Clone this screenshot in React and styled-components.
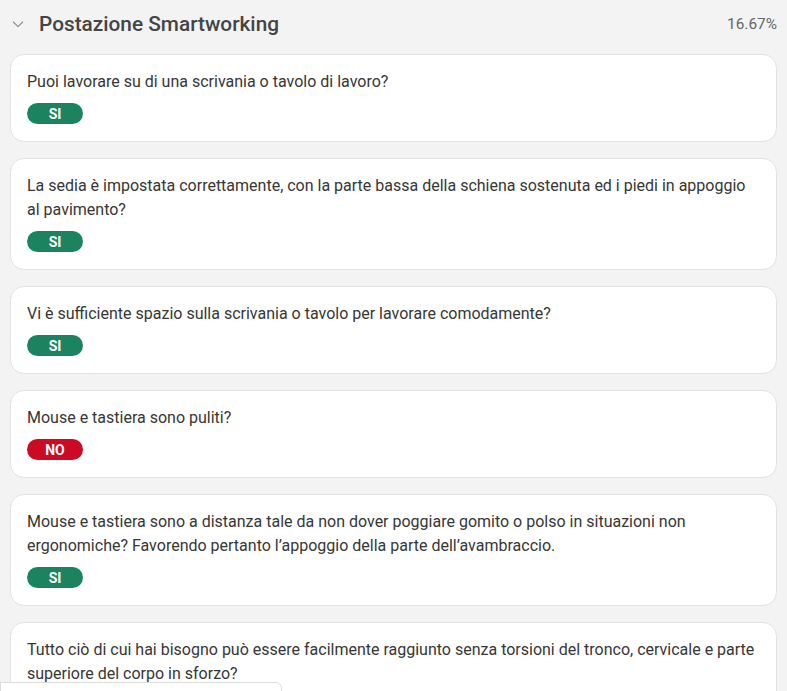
import React from "react";
import styled, { createGlobalStyle } from "styled-components";

const GlobalStyle = createGlobalStyle`
  html, body {
    margin: 0;
    padding: 0;
    background: #f3f3f3;
    font-family: Roboto, "Liberation Sans", Arial, sans-serif;
    color: #333;
  }
`;

const Page = styled.div`
  padding: 0 10px;
  height: 691px;
  overflow: hidden;
`;

const Header = styled.div`
  display: flex;
  align-items: center;
  height: 48px;
`;

const Chevron = styled.span`
  display: flex;
  align-items: center;
  width: 18px;
  margin-right: 11px;
  color: #8a8a8a;
`;

const Title = styled.h2`
  flex: 1;
  margin: 0;
  font-size: 20.8px;
  font-weight: 500;
  color: #444;
`;

const Percent = styled.span`
  font-size: 15.4px;
  color: #666;
`;

const List = styled.div`
  display: flex;
  flex-direction: column;
  gap: 16px;
  padding-top: 6px;
`;

const Card = styled.div`
  background: #fff;
  border: 1px solid #e2e2e2;
  border-radius: 14px;
  padding: 15px 16px 17px;
`;

const Question = styled.p`
  margin: 0;
  font-size: 16px;
  line-height: 24px;
  color: #363636;
`;

const Badge = styled.span`
  display: inline-flex;
  align-items: center;
  justify-content: center;
  margin-top: 9px;
  width: 56px;
  height: 21px;
  border-radius: 11px;
  font-size: 14px;
  font-weight: 700;
  color: #fff;
  background: ${(p) => (p.$no ? "#cc0a24" : "#1c8361")};
`;

const Footer = styled.div`
  position: fixed;
  left: 0;
  bottom: -10px;
  width: 280px;
  height: 17px;
  background: #fff;
  border: 1px solid #dcdcdc;
  border-radius: 0 6px 0 0;
`;

const items = [
  { q: "Puoi lavorare su di una scrivania o tavolo di lavoro?", a: "SI" },
  {
    q: "La sedia è impostata correttamente, con la parte bassa della schiena sostenuta ed i piedi in appoggio al pavimento?",
    a: "SI",
  },
  { q: "Vi è sufficiente spazio sulla scrivania o tavolo per lavorare comodamente?", a: "SI" },
  { q: "Mouse e tastiera sono puliti?", a: "NO" },
  {
    q: "Mouse e tastiera sono a distanza tale da non dover poggiare gomito o polso in situazioni non ergonomiche? Favorendo pertanto l’appoggio della parte dell’avambraccio.",
    a: "SI",
  },
  {
    q: "Tutto ciò di cui hai bisogno può essere facilmente raggiunto senza torsioni del tronco, cervicale e parte superiore del corpo in sforzo?",
    a: "SI",
  },
];

export default function App() {
  return (
    <>
      <GlobalStyle />
      <Page>
        <Header>
          <Chevron>
            <svg width="16" height="16" viewBox="0 0 24 24" fill="none" stroke="currentColor" strokeWidth="1.6" strokeLinecap="round" strokeLinejoin="round">
              <path d="M5 9l7 7 7-7" />
            </svg>
          </Chevron>
          <Title>Postazione Smartworking</Title>
          <Percent>16.67%</Percent>
        </Header>
        <List>
          {items.map((it, i) => (
            <Card key={i}>
              <Question>{it.q}</Question>
              <Badge $no={it.a === "NO"}>{it.a}</Badge>
            </Card>
          ))}
        </List>
      </Page>
      <Footer />
    </>
  );
}
